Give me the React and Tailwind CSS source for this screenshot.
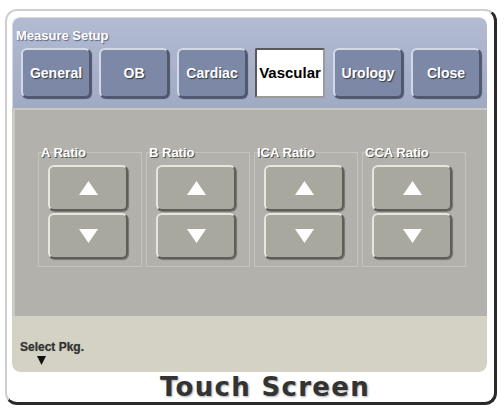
import React from 'react'

const tabs = ['General', 'OB', 'Cardiac', 'Vascular', 'Urology', 'Close']
const ratios = ['A Ratio', 'B Ratio', 'ICA Ratio', 'CCA Ratio']

function TabButton({ label, active }) {
  if (active) {
    return (
      <button
        type="button"
        className="w-[70px] h-[50px] flex items-center justify-center bg-white rounded-[2px] border-2 border-t-[#5a5a5a] border-l-[#5a5a5a] border-r-[#9a9a9a] border-b-[#9a9a9a] text-[15px] font-bold text-black"
      >
        {label}
      </button>
    )
  }
  return (
    <button
      type="button"
      className="w-[70px] h-[50px] flex items-center justify-center rounded-[6px] bg-[#7c88a6] border-2 border-t-[#d3d9e6] border-l-[#d3d9e6] border-r-[#505870] border-b-[#505870] shadow-[1px_1px_1px_rgba(40,45,60,0.7)] text-[14px] font-bold text-white [text-shadow:1px_1px_1px_rgba(30,35,50,0.8)]"
    >
      {label}
    </button>
  )
}

function ArrowButton({ down }) {
  return (
    <button
      type="button"
      className="w-[80px] h-[46px] flex items-center justify-center rounded-[6px] bg-[#a9a89f] border-2 border-t-[#e6e6de] border-l-[#e6e6de] border-r-[#5e5e58] border-b-[#5e5e58] shadow-[1px_1px_1px_rgba(0,0,0,0.35)]"
    >
      <svg width="19" height="14" viewBox="0 0 19 14">
        {down ? (
          <polygon points="0,0 19,0 9.5,14" fill="#ffffff" />
        ) : (
          <polygon points="9.5,0 19,14 0,14" fill="#ffffff" />
        )}
      </svg>
    </button>
  )
}

function RatioGroup({ label }) {
  return (
    <div className="relative w-[104px] h-[115px] border border-[#c6c4bf] pt-[12px] pl-[9px]">
      <span className="absolute -top-[8px] left-[2px] text-[13px] leading-[15px] font-bold text-white [text-shadow:1px_1px_0_#55554f]">
        {label}
      </span>
      <div className="flex flex-col gap-[2px]">
        <ArrowButton />
        <ArrowButton down />
      </div>
    </div>
  )
}

export default function App() {
  return (
    <div className="w-[504px] h-[412px] bg-white pt-[9px] pl-[5px] font-['Liberation_Sans',Arial,sans-serif]">
      <div className="w-[492px] h-[396px] rounded-[12px] bg-white border-2 border-t-[#cfcfcf] border-l-[#cfcfcf] border-r-[3px] border-b-[3px] border-r-[#2a2a2a] border-b-[#2a2a2a] pt-[6px] pl-[5px]">
        <div className="w-[475px] h-[355px] flex flex-col rounded-[8px] overflow-hidden">
          {/* header with tab buttons */}
          <div className="h-[91px] bg-gradient-to-b from-[#b2bbd2] to-[#a0aac3] border-t border-l border-[#d4d9e6] rounded-t-[8px] pt-[10px] pl-[3px]">
            <div className="h-[15px] leading-[15px] text-[13px] font-bold text-white [text-shadow:1px_1px_1px_#5b6380]">
              Measure Setup
            </div>
            <div className="flex gap-[8px] mt-[5px] pl-[5px]">
              {tabs.map((t) => (
                <TabButton key={t} label={t} active={t === 'Vascular'} />
              ))}
            </div>
          </div>

          {/* ratio controls */}
          <div className="h-[208px] bg-[#b3b1ab] border-t-2 border-[#c9c8c3] border-l-[3px] pt-[42px] pl-[23px]">
            <div className="flex gap-[4px]">
              {ratios.map((r) => (
                <RatioGroup key={r} label={r} />
              ))}
            </div>
          </div>

          {/* package selector */}
          <div className="flex-1 bg-[#d4d2c5] rounded-b-[8px] pt-[24px] pl-[8px]">
            <div className="text-[12px] leading-[15px] font-bold text-[#333] [text-shadow:0_0_1px_rgba(0,0,0,0.4)]">
              Select Pkg.
            </div>
            <svg className="ml-[17px] mt-[1px]" width="9" height="9" viewBox="0 0 9 9">
              <polygon points="0,0 9,0 4.5,9" fill="#111111" />
            </svg>
          </div>
        </div>

        <div className="h-[30px] leading-[30px] pl-[24px] text-center text-[26px] font-bold tracking-[1.3px] text-[#333] font-['DejaVu_Sans',sans-serif] [text-shadow:1px_1px_2px_rgba(0,0,0,0.35)]">
          Touch Screen
        </div>
      </div>
    </div>
  )
}
